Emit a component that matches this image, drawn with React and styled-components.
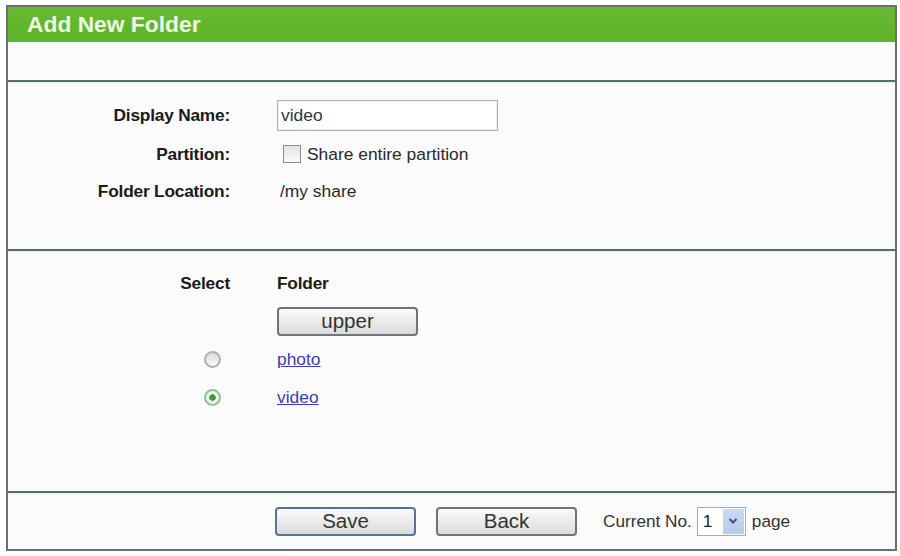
import React from "react";
import styled, { createGlobalStyle } from "styled-components";

const GlobalStyle = createGlobalStyle`
  body {
    margin: 0;
    background: #ffffff;
    font-family: "Liberation Sans", Arial, sans-serif;
  }
`;

const Frame = styled.div`
  margin: 5px 0 0 6px;
  width: 887px;
  height: 542px;
  border: 2px solid #6e6e6e;
  background: #fbfbfb;
  display: flex;
  flex-direction: column;
`;

const Header = styled.div`
  height: 35px;
  background: linear-gradient(#68bb30, #5eb329);
  color: #eef8e2;
  font-weight: bold;
  font-size: 22.8px;
  display: flex;
  align-items: center;
  padding-left: 19px;
`;

const Section = styled.div`
  height: ${(p) => p.h}px;
  border-bottom: 2px solid #5b6e64;
  box-shadow: 0 1px 0 #dff3e8;
  padding-top: ${(p) => p.pt || 0}px;
  box-sizing: content-box;
`;

const Row = styled.div`
  display: grid;
  grid-template-columns: 222px 1fr;
  column-gap: 47px;
  align-items: center;
  height: ${(p) => p.h || 38}px;
`;

const Label = styled.div`
  text-align: ${(p) => (p.left ? "left" : "right")};
  font-weight: bold;
  font-size: 17.3px;
  color: #1a1a1a;
  letter-spacing: -0.2px;
`;

const RadioCell = styled.div`
  display: flex;
  justify-content: flex-end;
  padding-right: 9px;
`;

const Value = styled.div`
  display: flex;
  align-items: center;
  font-size: 17.4px;
  color: #2a2a2a;
  padding-left: ${(p) => p.pl || 0}px;
`;

const TextInput = styled.input`
  width: 221px;
  height: 31px;
  box-sizing: border-box;
  border: 1px solid #a9b3b9;
  box-shadow: inset 0 0 0 1px #eef1f2;
  background: #fff;
  font-family: "Liberation Sans", Arial, sans-serif;
  font-size: 17.4px;
  color: #333;
  padding: 0 3px;
  outline: none;
`;

const CheckBox = styled.span`
  width: 18px;
  height: 18px;
  box-sizing: border-box;
  margin-left: 6px;
  margin-right: 6px;
  border: 1px solid #8a8f94;
  background: linear-gradient(#e2e2e2, #fafafa);
`;

const Radio = styled.span`
  width: 17px;
  height: 17px;
  box-sizing: border-box;
  border-radius: 50%;
  border: 2px solid ${(p) => (p.checked ? "#92bf92" : "#b0b0b0")};
  background: ${(p) =>
    p.checked
      ? "radial-gradient(circle, #3e9a3e 0 3px, #eef4ee 3.5px)"
      : "linear-gradient(#dedede, #f7f7f7)"};
`;

const FolderLink = styled.a`
  color: #3d3db3;
  text-decoration: underline;
  font-size: 17.4px;
  cursor: pointer;
`;

const Button = styled.button`
  width: 141px;
  height: 29px;
  border-radius: 4px;
  border: 2px solid ${(p) => (p.primary ? "#55739e" : "#6f7479")};
  background: linear-gradient(#fbfbfb, #e9e9e9 55%, #dcdcdc);
  font-family: "Liberation Sans", Arial, sans-serif;
  font-size: 20.5px;
  color: #333;
  padding: 0;
  display: flex;
  align-items: center;
  justify-content: center;
`;

const Footer = styled.div`
  height: 56px;
  display: flex;
  align-items: center;
  padding-left: 267px;
  font-size: 17.2px;
  color: #333;
`;

const Spacer = styled.span`
  width: ${(p) => p.w}px;
`;

const PageSelect = styled.div`
  width: 49px;
  height: 29px;
  box-sizing: border-box;
  border: 1px solid #a4adbd;
  background: #fff;
  display: flex;
  align-items: stretch;
  margin: 0 6px 0 5px;
`;

const PageNum = styled.span`
  flex: 1;
  display: flex;
  align-items: center;
  padding-left: 5px;
  font-size: 17.4px;
  color: #222;
`;

const Arrow = styled.span`
  width: 21px;
  margin: 1px;
  background: linear-gradient(#cddbf3, #b7caec);
  display: flex;
  align-items: center;
  justify-content: center;
`;

export default function App() {
  return (
    <>
      <GlobalStyle />
      <Frame>
        <Header>Add New Folder</Header>
        <Section h={38} />
        <Section h={153} pt={14}>
          <Row>
            <Label>Display Name:</Label>
            <Value>
              <TextInput defaultValue="video" />
            </Value>
          </Row>
          <Row h={40}>
            <Label>Partition:</Label>
            <Value>
              <CheckBox />
              Share entire partition
            </Value>
          </Row>
          <Row h={34}>
            <Label>Folder Location:</Label>
            <Value pl={3}>/my share</Value>
          </Row>
        </Section>
        <Section h={227} pt={13}>
          <Row>
            <Label>Select</Label>
            <Label left>Folder</Label>
          </Row>
          <Row>
            <span />
            <Value>
              <Button>upper</Button>
            </Value>
          </Row>
          <Row>
            <RadioCell>
              <Radio />
            </RadioCell>
            <Value>
              <FolderLink>photo</FolderLink>
            </Value>
          </Row>
          <Row>
            <RadioCell>
              <Radio checked />
            </RadioCell>
            <Value>
              <FolderLink>video</FolderLink>
            </Value>
          </Row>
        </Section>
        <Footer>
          <Button primary>Save</Button>
          <Spacer w={20} />
          <Button>Back</Button>
          <Spacer w={26} />
          Current No.
          <PageSelect>
            <PageNum>1</PageNum>
            <Arrow>
              <svg width="10" height="8" viewBox="0 0 10 8">
                <path d="M1.5 2 L5 5.5 L8.5 2" fill="none" stroke="#2f4f8f" strokeWidth="2" />
              </svg>
            </Arrow>
          </PageSelect>
          page
        </Footer>
      </Frame>
    </>
  );
}
